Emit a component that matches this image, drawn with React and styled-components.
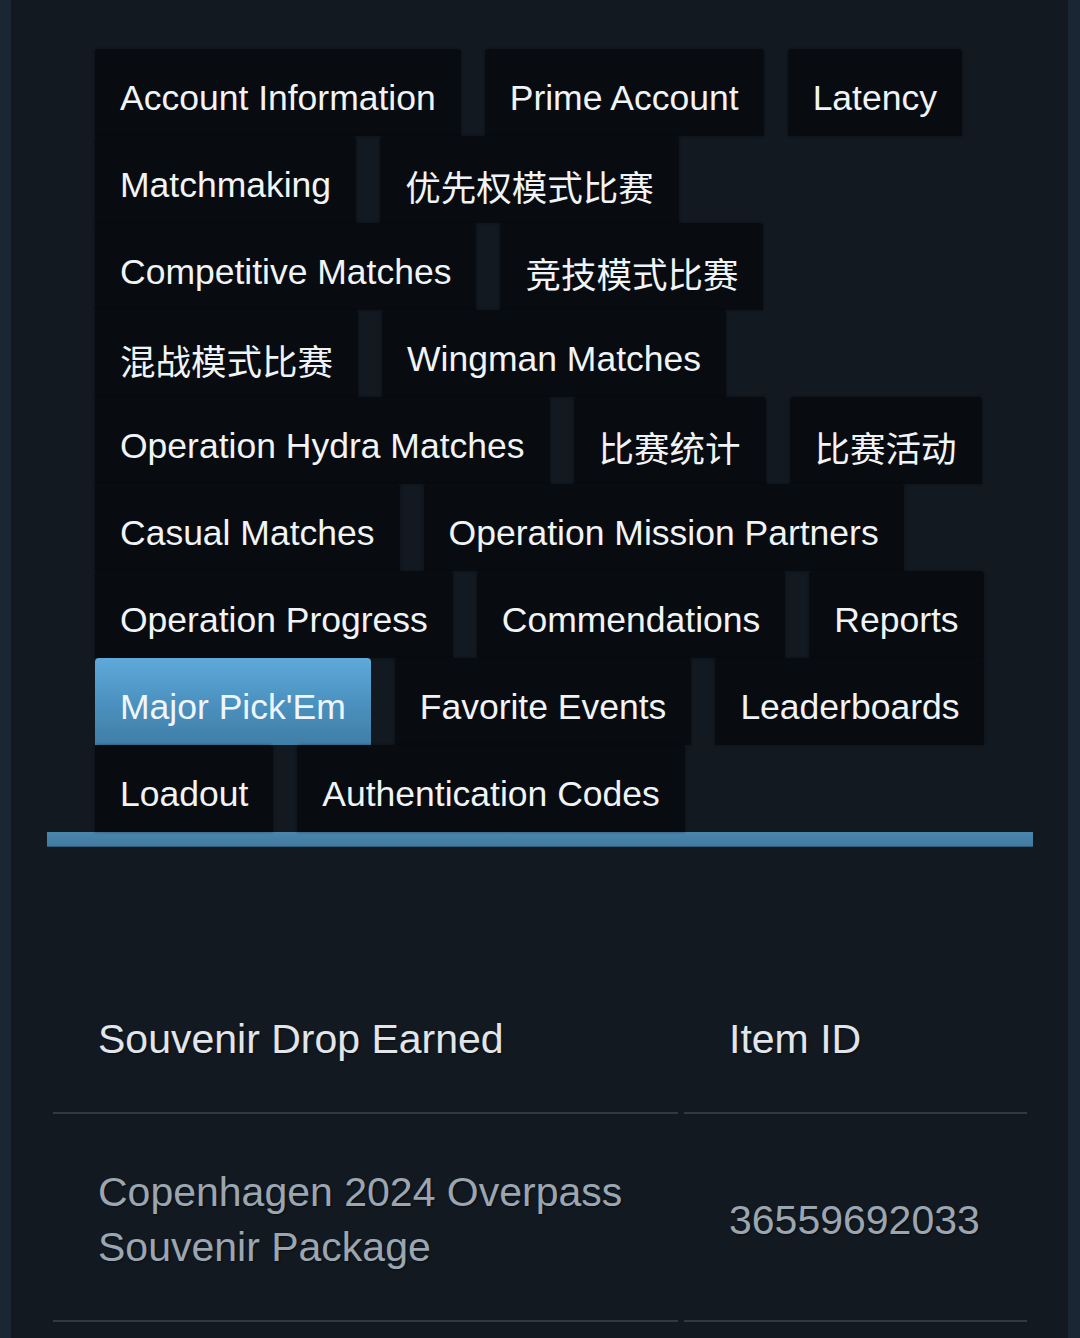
import React from "react";
import styled, { createGlobalStyle, css } from "styled-components";

const GlobalStyle = createGlobalStyle`
  html, body {
    margin: 0;
    padding: 0;
    background: #1b2634;
  }
  body {
    font-family: "Liberation Sans", "Noto Sans CJK SC", sans-serif;
  }
`;

const Panel = styled.div`
  margin: 0 12px 0 11px;
  min-height: 1338px;
  background: #121921;
  padding: 0 35px 0 36px;
  box-sizing: border-box;
  overflow: hidden;
`;

const TabBar = styled.nav`
  display: flex;
  flex-wrap: wrap;
  padding: 49px 0 0 48px;
`;

const Tab = styled.a`
  display: flex;
  align-items: center;
  box-sizing: border-box;
  height: 87px;
  padding: 11px 25px 0 25px;
  margin-right: 24px;
  font-family: "Liberation Sans", "Noto Sans CJK SC", sans-serif;
  font-size: 35.5px;
  color: #f1f4f6;
  white-space: nowrap;
  background: #080b10;
  border-radius: 4px 4px 0 0;
  box-shadow: 0 0 3px rgba(0, 0, 0, 0.45);
  text-decoration: none;
  cursor: pointer;

  ${(p) =>
    p.$active &&
    css`
      background: linear-gradient(to bottom, #5eaadb 0%, #4c92c0 50%, #3f7ea7 100%);
      color: #eef6fc;
      box-shadow: none;
    `}
`;

const Bar = styled.div`
  height: 15px;
  background: linear-gradient(to bottom, #4b86ad, #427aa0);
  border-bottom: 1px solid #2e5a78;
  box-sizing: border-box;
`;

const Table = styled.table`
  width: 100%;
  margin-top: 120px;
  border-collapse: separate;
  border-spacing: 6px 0;
  font-family: "Liberation Sans", sans-serif;
  font-size: 41px;
  line-height: 55px;
`;

const HeadCell = styled.th`
  text-align: left;
  font-weight: normal;
  color: #e2e6ea;
  padding: 45px 46px 45px 45px;
  border-bottom: 2px solid #2f3a46;
  vertical-align: middle;
  width: ${(p) => p.$w || "auto"};
  text-shadow: 1px 1px 2px rgba(0, 0, 0, 0.45);
`;

const Cell = styled.td`
  color: #9ba6b1;
  padding: 51px 46px 45px 45px;
  border-bottom: 2px solid #2f3a46;
  vertical-align: middle;
  text-shadow: 1px 1px 2px rgba(0, 0, 0, 0.45);
`;

const tabs = [
  "Account Information",
  "Prime Account",
  "Latency",
  "Matchmaking",
  "优先权模式比赛",
  "Competitive Matches",
  "竞技模式比赛",
  "混战模式比赛",
  "Wingman Matches",
  "Operation Hydra Matches",
  "比赛统计",
  "比赛活动",
  "Casual Matches",
  "Operation Mission Partners",
  "Operation Progress",
  "Commendations",
  "Reports",
  "Major Pick'Em",
  "Favorite Events",
  "Leaderboards",
  "Loadout",
  "Authentication Codes",
];

export default function App() {
  return (
    <>
      <GlobalStyle />
      <Panel>
        <TabBar>
          {tabs.map((t) => (
            <Tab key={t} $active={t === "Major Pick'Em"}>
              {t}
            </Tab>
          ))}
        </TabBar>
        <Bar />
        <Table>
          <thead>
            <tr>
              <HeadCell $w="534px">Souvenir Drop Earned</HeadCell>
              <HeadCell>Item ID</HeadCell>
            </tr>
          </thead>
          <tbody>
            <tr>
              <Cell>
                Copenhagen 2024 Overpass
                <br />
                Souvenir Package
              </Cell>
              <Cell>36559692033</Cell>
            </tr>
          </tbody>
        </Table>
      </Panel>
    </>
  );
}
